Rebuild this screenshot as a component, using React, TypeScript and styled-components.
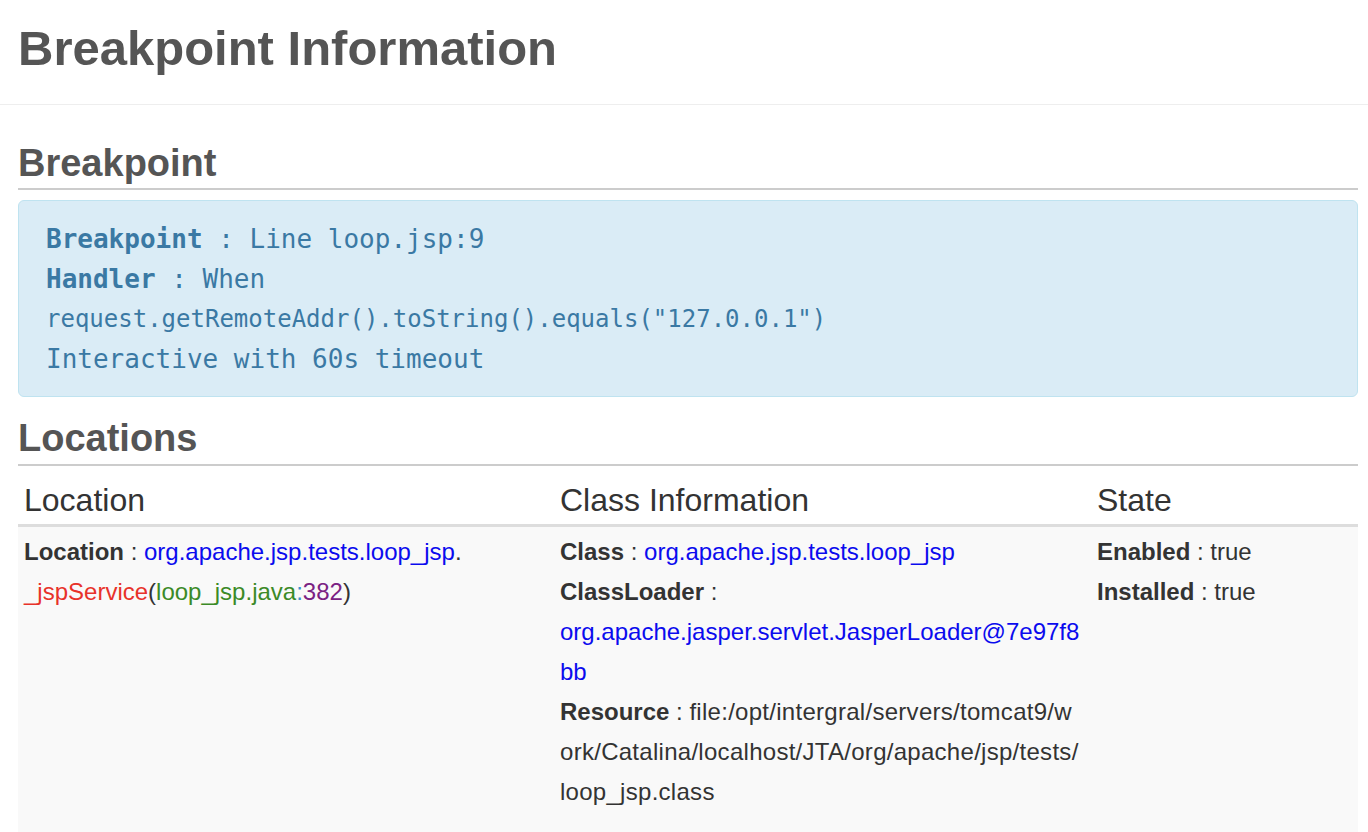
import * as React from 'react';
import styled, { createGlobalStyle } from "styled-components";

const GlobalStyle = createGlobalStyle`
    html, body {
        margin: 0;
        padding: 0;
        background: #fff;
        font-family: "Liberation Sans", Arial, Helvetica, sans-serif;
        color: #333;
    }
`

const Header = styled.header`
    padding: 22px 18px 29px;
    border-bottom: 1px solid #eee;
`

const Title = styled.h1`
    margin: 0;
    font-size: 49px;
    line-height: 52.8px;
    font-weight: 700;
    color: #555;
`

const Content = styled.main`
    padding: 0 10px 0 18px;
`

const SectionTitle = styled.h2<{ $gap: number }>`
    margin: ${p => p.$gap}px 0 0;
    padding-bottom: 5px;
    font-size: 38px;
    line-height: 39.6px;
    font-weight: 700;
    color: #555;
    border-bottom: 2px solid #ccc;
`

const Alert = styled.div`
    margin-top: 10px;
    padding: 18px 27px 17px;
    background-color: #daecf6;
    border: 1px solid #bfe3f0;
    border-radius: 6px;
    color: #3a79a4;
    font-family: "DejaVu Sans Mono", Menlo, monospace;
`

const AlertLine = styled.div<{ $size?: number }>`
    font-size: ${p => p.$size || 26}px;
    line-height: 40px;
    white-space: pre;

    b {
        font-weight: 700;
    }
`

const Table = styled.table`
    width: 100%;
    border-collapse: collapse;
    table-layout: fixed;
`

const Th = styled.th<{ $width: number }>`
    box-sizing: border-box;
    width: ${p => p.$width}px;
    padding: 11px 6px 0;
    text-align: left;
    font-size: 32px;
    line-height: 47px;
    font-weight: 400;
    color: #333;
    border-bottom: 3px solid #ddd;
`

const Td = styled.td<{ $padRight?: number }>`
    box-sizing: border-box;
    padding: 5px ${p => p.$padRight || 6}px 20px 6px;
    vertical-align: top;
    background-color: #f9f9f9;
    font-size: 24px;
    line-height: 40px;
    word-break: break-all;
`

const Field = styled.div``

const Key = styled.b`
    font-weight: 700;
`

const Link = styled.a<{ $block?: boolean }>`
    color: #0b0bee;
    text-decoration: none;
    display: ${p => p.$block ? "inline-block" : "inline"};
`

const Path = styled.span`
    letter-spacing: 0.28px;
`

const Frame = styled.span`
    display: inline-block;
    white-space: nowrap;
`

const Tok = styled.span<{ $c: string }>`
    color: ${p => p.$c};
`

function LocationCell() {
    return (
        <Td>
            <Field>
                <Key>Location</Key> : <Link href="#">org.apache.jsp.tests.loop_jsp</Link>.
                <Frame>
                    <Tok $c="#e8322a">_jspService</Tok>(<Tok $c="#3b8a27">loop_jsp.java</Tok><Tok $c="#3a92cf">:</Tok><Tok $c="#7b2283">382</Tok>)
                </Frame>
            </Field>
        </Td>
    )
}

function ClassCell() {
    return (
        <Td $padRight={8}>
            <Field><Key>Class</Key> : <Link href="#">org.apache.jsp.tests.loop_jsp</Link></Field>
            <Field><Key>ClassLoader</Key> : <Link $block href="#">org.apache.jasper.servlet.JasperLoader@7e97f8bb</Link></Field>
            <Field><Key>Resource</Key> : <Path>file:/opt/intergral/servers/tomcat9/work/Catalina/localhost/JTA/org/apache/jsp/tests/loop_jsp.class</Path></Field>
        </Td>
    )
}

function StateCell() {
    return (
        <Td>
            <Field><Key>Enabled</Key> : true</Field>
            <Field><Key>Installed</Key> : true</Field>
        </Td>
    )
}

export default function App() {
    return (
        <>
            <GlobalStyle />
            <Header>
                <Title>Breakpoint Information</Title>
            </Header>
            <Content>
                <SectionTitle $gap={39}>Breakpoint</SectionTitle>
                <Alert>
                    <AlertLine><b>Breakpoint</b> : Line loop.jsp:9</AlertLine>
                    <AlertLine><b>Handler</b> : When</AlertLine>
                    <AlertLine $size={24}>request.getRemoteAddr().toString().equals("127.0.0.1")</AlertLine>
                    <AlertLine>Interactive with 60s timeout</AlertLine>
                </Alert>

                <SectionTitle $gap={22}>Locations</SectionTitle>
                <Table>
                    <thead>
                        <tr>
                            <Th $width={536}>Location</Th>
                            <Th $width={537}>Class Information</Th>
                            <Th $width={267}>State</Th>
                        </tr>
                    </thead>
                    <tbody>
                        <tr>
                            <LocationCell />
                            <ClassCell />
                            <StateCell />
                        </tr>
                    </tbody>
                </Table>
            </Content>
        </>
    )
}
